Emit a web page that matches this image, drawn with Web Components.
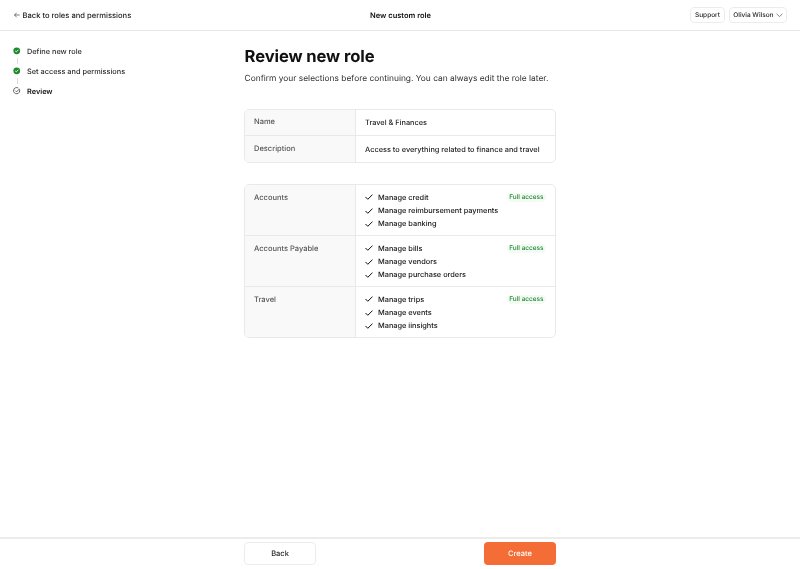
<!DOCTYPE html>
<html lang="en">
<head>
<meta charset="utf-8">
<title>New custom role</title>
<style>
    html, body { margin: 0; height: 100%; background: #fff; }
    body { font-family: Inter, "Liberation Sans", sans-serif; color: #1d1d1f; text-rendering: geometricPrecision; }
</style>
</head>
<body>

<role-page>
    <top-bar slot="top" title="New custom role" user="Olivia Wilson">Back to roles and permissions</top-bar>

    <step-list slot="side">
        <step-item state="done">Define new role</step-item>
        <step-item state="done">Set access and permissions</step-item>
        <step-item state="current" last>Review</step-item>
    </step-list>

    <h-title heading="Review new role">Confirm your selections before continuing. You can always edit the role later.</h-title>

    <review-card class="info">
        <review-row label="Name" compact>Travel &amp; Finances</review-row>
        <review-row label="Description" compact>Access to everything related to finance and travel</review-row>
    </review-card>

    <review-card>
        <review-row label="Accounts" badge="Full access">
            <perm-item>Manage credit</perm-item>
            <perm-item>Manage reimbursement payments</perm-item>
            <perm-item>Manage banking</perm-item>
        </review-row>
        <review-row label="Accounts Payable" badge="Full access">
            <perm-item>Manage bills</perm-item>
            <perm-item>Manage vendors</perm-item>
            <perm-item>Manage purchase orders</perm-item>
        </review-row>
        <review-row label="Travel" badge="Full access">
            <perm-item>Manage trips</perm-item>
            <perm-item>Manage events</perm-item>
            <perm-item>Manage iinsights</perm-item>
        </review-row>
    </review-card>

    <bottom-bar slot="bottom"></bottom-bar>
</role-page>

<script>
// small helper, every element here is just a shadow root with some markup
function shadow(el, html)
{
    el.attachShadow({mode: 'open'}).innerHTML = html;
}


class RolePage extends HTMLElement
{
    constructor()
    {
        super();
        shadow(this, `
            <style>
                :host { display: flex; flex-direction: column; height: 569px; overflow: hidden; will-change: transform; }
                .body { flex: 1; display: grid; grid-template-columns: 244px 312px 1fr; min-height: 0; }
                .center { padding-top: 15px; display: flex; flex-direction: column; }
            </style>
            <slot name="top"></slot>
            <div class="body">
                <div><slot name="side"></slot></div>
                <div class="center"><slot></slot></div>
                <div></div>
            </div>
            <slot name="bottom"></slot>
        `);
    }
}
customElements.define('role-page', RolePage);


class TopBar extends HTMLElement
{
    constructor()
    {
        super();
        shadow(this, `
            <style>
                :host { display: grid; grid-template-columns: 1fr auto 1fr; align-items: center; height: 30px; padding: 0 13px 0 14px; border-bottom: 1px solid #e6e6e6; font-size: 7.6px; font-weight: 500; color: #1d1d1f; flex: none; }
                .back { display: flex; align-items: center; gap: 2.5px; color: #222225; }
                .back svg { width: 6px; height: 6px; }
                .title { font-weight: 600; font-size: 7.5px; color: #111; }
                .right { display: flex; justify-content: flex-end; gap: 4px; }
                .pill { display: flex; align-items: center; gap: 2px; height: 16px; box-sizing: border-box; padding: 0 3.5px; border: 1px solid #ececec; border-radius: 4px; font-size: 6.5px; font-weight: 500; }
                .pill:first-child { padding: 0 3.9px; }
                .pill svg { width: 7px; height: 4.5px; }
            </style>
            <div class="back">
                <svg viewBox="0 0 8 8" fill="none" stroke="#222225" stroke-width=".8"><path d="M7.5 4H.7M3.6 1 .7 4l2.9 3"/></svg>
                <span><slot></slot></span>
            </div>
            <div class="title">${this.getAttribute('title')}</div>
            <div class="right">
                <div class="pill">Support</div>
                <div class="pill">${this.getAttribute('user')}
                    <svg viewBox="0 0 8 5" fill="none" stroke="#3a3a3d" stroke-width=".7"><path d="M.6.8 4 4 7.4.8"/></svg>
                </div>
            </div>
        `);
        this.removeAttribute('title');
    }
}
customElements.define('top-bar', TopBar);


class StepList extends HTMLElement
{
    constructor()
    {
        super();
        shadow(this, `
            <style>
                :host { display: flex; flex-direction: column; padding: 15px 0 0 13px; }
            </style>
            <slot></slot>
        `);
    }
}
customElements.define('step-list', StepList);


class StepItem extends HTMLElement
{
    constructor()
    {
        super();
        let current = this.getAttribute('state') == 'current';
        let icon = current
            ? `<svg viewBox="0 0 8 8" fill="none" stroke="#333336" stroke-width=".8"><path d="M6.9 2.6A3.3 3.3 0 1 1 5.6 1.1"/><path d="M2.5 3.9 3.8 5.2 7 1.9"/></svg>`
            : `<svg viewBox="0 0 8 8"><circle cx="4" cy="4" r="3.6" fill="#1e8a2e"/><path d="M2.3 4.1 3.5 5.2 5.7 2.9" fill="none" stroke="#fff" stroke-width=".9"/></svg>`;
        shadow(this, `
            <style>
                :host { display: block; position: relative; height: 20px; font-size: 7.35px; font-weight: 500; color: #2c2c2f; }
                .row { display: flex; align-items: center; gap: 6.5px; height: 10px; }
                svg { width: 7.5px; height: 7.5px; flex: none; }
                .line { position: absolute; left: 3.5px; top: 12px; height: 6px; width: 1px; background: #dcdcdc; }
                :host([state="current"]) { color: #111; font-weight: 600; }
                :host([last]) .line { display: none; }
            </style>
            <div class="row">${icon}<span><slot></slot></span></div>
            <div class="line"></div>
        `);
    }
}
customElements.define('step-item', StepItem);


class HTitle extends HTMLElement
{
    constructor()
    {
        super();
        shadow(this, `
            <style>
                :host { display: block; margin-bottom: 23.5px; padding-left: .6px; }
                h1 { margin: 0; font-size: 16.6px; line-height: 22px; font-weight: 650; color: #111; letter-spacing: -.1px; }
                p { margin: 5px 0 0; font-size: 8.4px; line-height: 12px; color: #2e2e31; white-space: nowrap; }
            </style>
            <h1>${this.getAttribute('heading')}</h1>
            <p><slot></slot></p>
        `);
    }
}
customElements.define('h-title', HTitle);


class ReviewCard extends HTMLElement
{
    constructor()
    {
        super();
        shadow(this, `
            <style>
                :host { display: block; margin-bottom: 21.5px; border: 1px solid #e9e9e9; border-radius: 5px; overflow: hidden; }
            </style>
            <slot></slot>
        `);
    }
}
customElements.define('review-card', ReviewCard);


class ReviewRow extends HTMLElement
{
    constructor()
    {
        super();
        let badge = this.getAttribute('badge');
        shadow(this, `
            <style>
                :host { display: grid; grid-template-columns: 111px 1fr; border-top: 1px solid #e9e9e9; font-size: 7.5px; font-weight: 500; }
                :host(:first-child) { border-top: 0; }
                .label { background: #f9f9f9; border-right: 1px solid #e9e9e9; padding: 7.8px 9px 0; color: #55555a; font-weight: 500; line-height: 10px; }
                .value { display: flex; justify-content: space-between; align-items: flex-start; padding: 5.5px 9px 4.3px 9px; font-weight: 450; }
                :host([compact]) .value { padding: 8.5px 9px 8px; font-size: 7.37px; color: #1d1d20; line-height: 9px; white-space: nowrap; }
                .items { display: flex; flex-direction: column; }
                .badge { background: #f3fbf4; color: #23882f; font-size: 6.45px; font-weight: 500; line-height: 9px; padding: 0 2.5px; margin-top: 2.9px; border-radius: 5px; white-space: nowrap; }
            </style>
            <div class="label">${this.getAttribute('label')}</div>
            <div class="value">
                <div class="items"><slot></slot></div>
                ${badge ? `<span class="badge">${badge}</span>` : ''}
            </div>
        `);
    }
}
customElements.define('review-row', ReviewRow);


class PermItem extends HTMLElement
{
    constructor()
    {
        super();
        shadow(this, `
            <style>
                :host { display: flex; align-items: center; gap: 5px; height: 13.4px; font-size: 7.37px; color: #151517; white-space: nowrap; }
                svg { width: 8px; height: 6px; flex: none; }
            </style>
            <svg viewBox="0 0 8 6" fill="none" stroke="#111" stroke-width="1"><path d="M.5 3 2.8 5.3 7.5.6"/></svg>
            <span><slot></slot></span>
        `);
    }
}
customElements.define('perm-item', PermItem);


class BottomBar extends HTMLElement
{
    constructor()
    {
        super();
        shadow(this, `
            <style>
                :host { display: grid; grid-template-columns: 72px 72px; justify-content: space-between; width: 312px; box-sizing: content-box; padding: 3px 244px 4px; height: 23px; border-top: 2px solid #ececec; flex: none; font-size: 7.5px; font-weight: 500; }
                .btn { display: flex; align-items: center; justify-content: center; border-radius: 4px; box-sizing: border-box; }
                .back { border: 1px solid #ececec; color: #1d1d20; }
                .create { background: #f46d36; color: #fff; }
            </style>
            <div class="btn back">Back</div>
            <div class="btn create">Create</div>
        `);
    }
}
customElements.define('bottom-bar', BottomBar);
</script>

</body>
</html>
